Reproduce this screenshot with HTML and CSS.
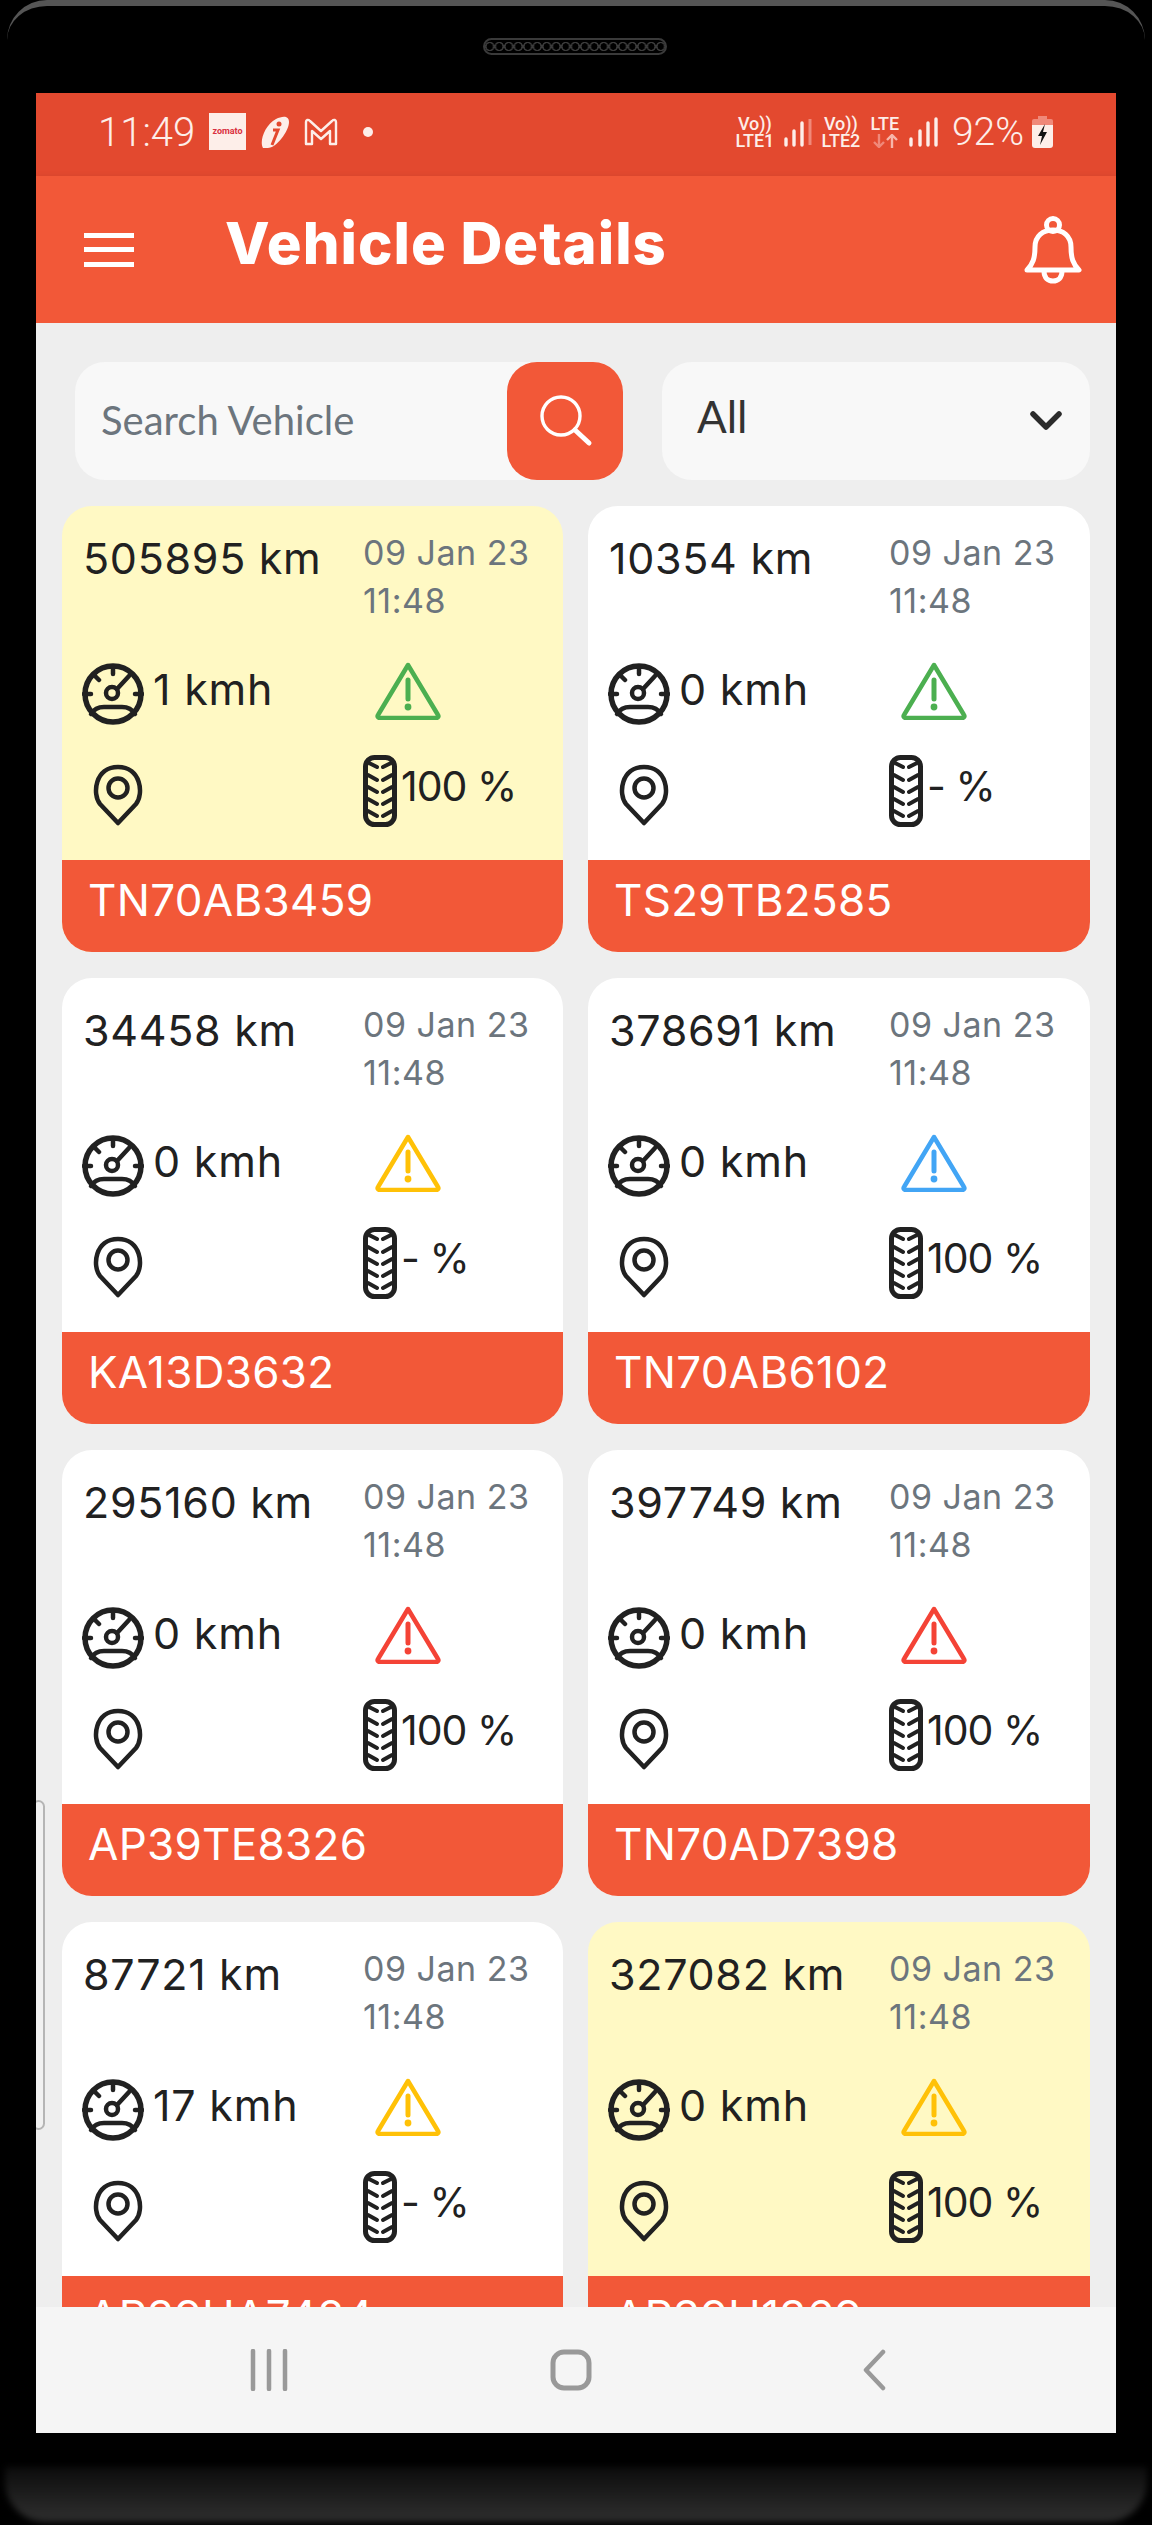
FILE: index.html
```html
<!DOCTYPE html>
<html lang="en">
<head>
  <meta charset="UTF-8">
  <title>Vehicle Details</title>
  <meta name="viewport" content="width=device-width, initial-scale=1.0">
  <link rel="stylesheet" href="styles.css">
</head>
<body>

  <svg class="defs" width="0" height="0">
    <symbol id="gauge" viewBox="0 0 62 62">
      <g fill="none" stroke="currentColor" stroke-linecap="round">
        <circle cx="31" cy="31" r="28" stroke-width="5.500"/>
        <path d="M31 4v7M12 12l5 5M2 31h7M53 31h7" stroke-width="4.500"/>
        <path d="M35 26L47 13" stroke-width="4.500"/>
        <circle cx="30" cy="30" r="6" stroke-width="4.500"/>
        <path d="M9 51c3-5 8-7 13-7h18c5 0 10 2 13 7" stroke-width="4.500"/>
      </g>
    </symbol>
    <symbol id="pin" viewBox="0 0 50 62">
      <path d="M25 59L7 40C-1 30 2 3 25 3s26 27 18 37z" fill="none" stroke="currentColor" stroke-width="4.500" stroke-linejoin="round"/>
      <circle cx="25" cy="24" r="9.500" fill="none" stroke="currentColor" stroke-width="4.500"/>
    </symbol>
    <symbol id="tire" viewBox="0 0 34 72">
      <rect x="2.500" y="2.500" width="29" height="67" rx="9" fill="none" stroke="currentColor" stroke-width="5"/>
      <path d="M6 8l8 4M28 8l-8 4M5 20l9 5M29 20l-9 5M5 32l9 5M29 32l-9 5M5 44l9 5M29 44l-9 5M5 56l9 5M29 56l-9 5" fill="none" stroke="currentColor" stroke-width="4" stroke-linecap="round"/>
    </symbol>
    <symbol id="warn" viewBox="0 0 66 58">
      <path d="M33 3L63 53c1 1.500 0 3-2 3H5c-2 0-3-1.500-2-3z" fill="none" stroke="currentColor" stroke-width="4.500" stroke-linejoin="round"/>
      <path d="M33 18v19" fill="none" stroke="currentColor" stroke-width="5" stroke-linecap="round"/>
      <circle cx="33" cy="45" r="3.400" fill="currentColor"/>
    </symbol>
  </svg>

  <div class="phone">
    <div class="top-edge"></div>
    <div class="speaker"></div>

    <div class="screen">
      <div class="status-bar">
        <div class="status-left">
          <span class="clock">11:49</span>
          <span class="zomato">zomato</span>
          <svg class="icici" width="30" height="34" viewBox="0 0 30 34">
            <path d="M3 33C-1 26 5 10 16 4c6-3 13-4 13 3 0 9-13 27-22 26z" fill="#fdeee9"/>
            <path d="M12 30l6-15h-5" fill="none" stroke="#e3492f" stroke-width="3"/>
            <circle cx="19" cy="9" r="2.500" fill="#e3492f"/>
          </svg>
          <svg class="gmail" width="34" height="28" viewBox="0 0 34 28">
            <path d="M2 26V4c0-2 2-3 4-1l11 10L28 3c2-2 4-1 4 1v22h-6V13l-9 8-9-8v13z" fill="none" stroke="#fdeee9" stroke-width="2.400" stroke-linejoin="round"/>
          </svg>
          <span class="dot"></span>
        </div>
        <div class="status-right">
          <div class="sim">Vo))<br>LTE1</div>
          <svg width="28" height="30" viewBox="0 0 28 30">
            <path d="M2 22v6M10 14v14M18 6v22" stroke="#fdeee9" stroke-width="3.400" stroke-linecap="round"/>
            <path d="M26 2v26" stroke="#f0897a" stroke-width="3"/>
          </svg>
          <div class="sim">Vo))<br>LTE2</div>
          <div class="lte">
            <span>LTE</span>
            <svg width="28" height="14" viewBox="0 0 28 14">
              <path d="M8 0v13M3 8l5 5 5-5" fill="none" stroke="#f0897a" stroke-width="2.400"/>
              <path d="M21 14V1M16 6l5-5 5 5" fill="none" stroke="#f7b6aa" stroke-width="2.400"/>
            </svg>
          </div>
          <svg width="30" height="30" viewBox="0 0 30 30">
            <path d="M3 22v6M12 14v14M20 6v22M28 2v26" stroke="#fdeee9" stroke-width="3.400" stroke-linecap="round"/>
          </svg>
          <span class="percent">92%</span>
          <svg class="battery" width="21" height="33" viewBox="0 0 21 33">
            <path d="M6 1h9v3h-9z" fill="#f0897a"/>
            <path d="M2 4h17a2 2 0 0 1 2 2v4H0V6a2 2 0 0 1 2-2z" fill="#f0897a"/>
            <path d="M0 10h21v20a3 3 0 0 1-3 3H3a3 3 0 0 1-3-3z" fill="#fdeee9"/>
            <path d="M13 9l-7 12h4l-2 9 7-13h-4z" fill="#111"/>
          </svg>
        </div>
      </div>

      <header class="app-bar">
        <div class="menu-icon"><span></span><span></span><span></span></div>
        <h1>Vehicle Details</h1>
        <svg class="bell" width="58" height="68" viewBox="0 0 58 68">
          <g fill="none" stroke="#fff" stroke-width="5" stroke-linejoin="round">
            <circle cx="29" cy="9" r="6.500"/>
            <path d="M3 54c6-6 8-12 8-23 0-11 8-17 18-17s18 6 18 17c0 11 2 17 8 23z"/>
            <path d="M20 55c0 7 4 10 9 10s9-3 9-10"/>
          </g>
        </svg>
      </header>

      <main class="content">
        <div class="side-handle"></div>

        <div class="filters">
          <div class="search">
            <span class="placeholder">Search Vehicle</span>
            <button class="search-btn">
              <svg width="60" height="60" viewBox="0 0 60 60">
                <circle cx="26" cy="25" r="19" fill="none" stroke="#fff" stroke-width="3.400"/>
                <path d="M40 39l14 13" stroke="#fff" stroke-width="5" stroke-linecap="round"/>
              </svg>
            </button>
          </div>
          <div class="select">
            <span>All</span>
            <svg width="32" height="20" viewBox="0 0 32 20">
              <path d="M3 3l13 13L29 3" fill="none" stroke="#2b2b2b" stroke-width="5.500" stroke-linecap="round" stroke-linejoin="round"/>
            </svg>
          </div>
        </div>

        <div class="cards">

          <div class="card highlight">
            <div class="card-body">
              <div class="km">505895 km</div>
              <div class="when">09 Jan 23<br>11:48</div>
              <div class="speed"><svg class="i-gauge"><use href="#gauge"/></svg><span>1 kmh</span></div>
              <svg class="i-warn green"><use href="#warn"/></svg>
              <svg class="i-pin"><use href="#pin"/></svg>
              <div class="tyre"><svg class="i-tire"><use href="#tire"/></svg><span>100 %</span></div>
            </div>
            <div class="plate">TN70AB3459</div>
          </div>

          <div class="card">
            <div class="card-body">
              <div class="km">10354 km</div>
              <div class="when">09 Jan 23<br>11:48</div>
              <div class="speed"><svg class="i-gauge"><use href="#gauge"/></svg><span>0 kmh</span></div>
              <svg class="i-warn green"><use href="#warn"/></svg>
              <svg class="i-pin"><use href="#pin"/></svg>
              <div class="tyre"><svg class="i-tire"><use href="#tire"/></svg><span>- %</span></div>
            </div>
            <div class="plate">TS29TB2585</div>
          </div>

          <div class="card">
            <div class="card-body">
              <div class="km">34458 km</div>
              <div class="when">09 Jan 23<br>11:48</div>
              <div class="speed"><svg class="i-gauge"><use href="#gauge"/></svg><span>0 kmh</span></div>
              <svg class="i-warn yellow"><use href="#warn"/></svg>
              <svg class="i-pin"><use href="#pin"/></svg>
              <div class="tyre"><svg class="i-tire"><use href="#tire"/></svg><span>- %</span></div>
            </div>
            <div class="plate">KA13D3632</div>
          </div>

          <div class="card">
            <div class="card-body">
              <div class="km">378691 km</div>
              <div class="when">09 Jan 23<br>11:48</div>
              <div class="speed"><svg class="i-gauge"><use href="#gauge"/></svg><span>0 kmh</span></div>
              <svg class="i-warn blue"><use href="#warn"/></svg>
              <svg class="i-pin"><use href="#pin"/></svg>
              <div class="tyre"><svg class="i-tire"><use href="#tire"/></svg><span>100 %</span></div>
            </div>
            <div class="plate">TN70AB6102</div>
          </div>

          <div class="card">
            <div class="card-body">
              <div class="km">295160 km</div>
              <div class="when">09 Jan 23<br>11:48</div>
              <div class="speed"><svg class="i-gauge"><use href="#gauge"/></svg><span>0 kmh</span></div>
              <svg class="i-warn red"><use href="#warn"/></svg>
              <svg class="i-pin"><use href="#pin"/></svg>
              <div class="tyre"><svg class="i-tire"><use href="#tire"/></svg><span>100 %</span></div>
            </div>
            <div class="plate">AP39TE8326</div>
          </div>

          <div class="card">
            <div class="card-body">
              <div class="km">397749 km</div>
              <div class="when">09 Jan 23<br>11:48</div>
              <div class="speed"><svg class="i-gauge"><use href="#gauge"/></svg><span>0 kmh</span></div>
              <svg class="i-warn red"><use href="#warn"/></svg>
              <svg class="i-pin"><use href="#pin"/></svg>
              <div class="tyre"><svg class="i-tire"><use href="#tire"/></svg><span>100 %</span></div>
            </div>
            <div class="plate">TN70AD7398</div>
          </div>

          <div class="card">
            <div class="card-body">
              <div class="km">87721 km</div>
              <div class="when">09 Jan 23<br>11:48</div>
              <div class="speed"><svg class="i-gauge"><use href="#gauge"/></svg><span>17 kmh</span></div>
              <svg class="i-warn yellow"><use href="#warn"/></svg>
              <svg class="i-pin"><use href="#pin"/></svg>
              <div class="tyre"><svg class="i-tire"><use href="#tire"/></svg><span>- %</span></div>
            </div>
            <div class="plate">AP39HA7484</div>
          </div>

          <div class="card highlight">
            <div class="card-body">
              <div class="km">327082 km</div>
              <div class="when">09 Jan 23<br>11:48</div>
              <div class="speed"><svg class="i-gauge"><use href="#gauge"/></svg><span>0 kmh</span></div>
              <svg class="i-warn yellow"><use href="#warn"/></svg>
              <svg class="i-pin"><use href="#pin"/></svg>
              <div class="tyre"><svg class="i-tire"><use href="#tire"/></svg><span>100 %</span></div>
            </div>
            <div class="plate">AP39U1369</div>
          </div>

        </div>
      </main>

      <nav class="nav-bar">
        <svg width="38" height="42" viewBox="0 0 38 42">
          <path d="M3 2v38M19 2v38M35 2v38" stroke="#999" stroke-width="4.500" stroke-linecap="round"/>
        </svg>
        <svg width="42" height="42" viewBox="0 0 42 42">
          <rect x="3" y="3" width="36" height="36" rx="11" fill="none" stroke="#999" stroke-width="5"/>
        </svg>
        <svg class="nav-back" width="24" height="42" viewBox="0 0 24 42">
          <path d="M21 3L4 21l17 18" fill="none" stroke="#999" stroke-width="4.500" stroke-linecap="round" stroke-linejoin="round"/>
        </svg>
      </nav>
    </div>

    <div class="chin"></div>
  </div>

</body>
</html>
```

FILE: styles.css
```css
* {
  box-sizing: border-box;
}
body {
  margin: 0;
  background: #000;
  font-family: "Inter", "Liberation Sans", sans-serif;
}
.defs {
  position: absolute;
}
.phone {
  position: relative;
  width: 1152px;
  height: 2525px;
  padding-top: 93px;
  background: #000;
  display: flex;
  flex-direction: column;
  align-items: center;
}
.top-edge {
  position: absolute;
  top: 0;
  left: 7px;
  right: 7px;
  height: 50px;
  border-top: 6px solid #555;
  border-radius: 40px 40px 0 0;
}
.speaker {
  position: absolute;
  top: 38px;
  left: 483px;
  width: 184px;
  height: 17px;
  border: 2px solid #3a3a3a;
  border-radius: 9px;
  background: radial-gradient(circle, #000 3px, #3c3c3c 3.500px 4.400px, #000 5px) 0 0 / 9.500px 100%;
}
.screen {
  width: 1080px;
  height: 2340px;
  display: flex;
  flex-direction: column;
  overflow: hidden;
}

/* status bar */
.status-bar {
  height: 83px;
  flex: none;
  background: #e3492f;
  color: #fdeee9;
  padding: 0 0 6px 64px;
  display: flex;
  align-items: center;
  justify-content: space-between;
}
.status-left,
.status-right {
  display: flex;
  align-items: center;
}
.status-right {
  gap: 8px;
  padding-right: 63px;
}
.clock {
  font: 300 40px "Roboto", sans-serif;
  width: 109px;
  margin-left: -2px;
  margin-right: 2px;
  padding-top: 2px;
}
.zomato {
  width: 37px;
  height: 37px;
  background: #fdeee9;
  color: #d9303f;
  font: 700 9px/37px "Roboto", sans-serif;
  text-align: center;
  margin-right: 14px;
}
.icici {
  margin-right: 14px;
}
.gmail {
  margin-right: 25px;
}
.dot {
  width: 10px;
  height: 10px;
  border-radius: 50%;
  background: #fdeee9;
}
.sim {
  font: 500 18px/17px "Roboto", sans-serif;
  text-align: center;
  width: 42px;
}
.lte {
  width: 30px;
  font: 500 18px/17px "Roboto", sans-serif;
  display: flex;
  flex-direction: column;
  align-items: center;
  gap: 2px;
}
.percent {
  font: 300 39px "Roboto", sans-serif;
  margin-left: 6px;
}

/* app bar */
.app-bar {
  height: 147px;
  flex: none;
  background: #f25838;
  padding: 0 34px 0 48px;
  display: flex;
  align-items: center;
  box-shadow: 0 3px 8px rgba(0, 0, 0, .15);
  position: relative;
}
.menu-icon {
  width: 50px;
  height: 34px;
  display: flex;
  flex-direction: column;
  justify-content: space-between;
  margin-right: 91px;
}
.menu-icon span {
  height: 5px;
  background: #fff;
}
.app-bar h1 {
  flex: 1;
  margin: 0 0 14px;
  color: #fff;
  font-size: 58px;
  font-weight: 800;
  letter-spacing: 1px;
}

/* content */
.content {
  flex: 1;
  min-height: 0;
  background: #eee;
  overflow: hidden;
  position: relative;
}
.side-handle {
  position: absolute;
  left: -4px;
  top: 1477px;
  width: 13px;
  height: 330px;
  border: 2px solid #b5b5b5;
  border-radius: 8px;
  background: #f1f1f1;
}
.filters {
  display: flex;
  gap: 39px;
  padding: 39px 26px 26px 39px;
}
.search {
  width: 548px;
  height: 118px;
  background: #f8f8f8;
  border-radius: 30px;
  display: flex;
  align-items: center;
  justify-content: space-between;
  padding-left: 26px;
}
.placeholder {
  font: 400 40px "Lato", sans-serif;
  color: #6c757d;
  margin-bottom: 2px;
}
.search-btn {
  width: 116px;
  height: 118px;
  border: none;
  border-radius: 30px;
  background: #f25838;
  padding: 0;
  display: flex;
  align-items: center;
  justify-content: center;
}
.select {
  flex: 1;
  height: 118px;
  background: #f8f8f8;
  border-radius: 30px;
  padding: 0 28px 10px 35px;
  display: flex;
  align-items: center;
  justify-content: space-between;
  font: 400 44px "Lato", sans-serif;
  color: #333;
}
.select svg {
  margin-top: 10px;
}

/* vehicle cards */
.cards {
  display: grid;
  grid-template-columns: 501px 502px;
  gap: 26px 25px;
  padding: 0 26px;
}
.card {
  height: 446px;
  border-radius: 30px;
  overflow: hidden;
  background: #fff;
  display: flex;
  flex-direction: column;
}
.card.highlight {
  background: #fff9c4;
}
.card-body {
  flex: 1;
  color: #212121;
  padding: 22px 0 0 21px;
  display: grid;
  grid-template-columns: 280px 1fr;
  grid-template-rows: 134px 64px 101px;
}
.km {
  font-size: 43px;
  letter-spacing: .7px;
  line-height: 58px;
  padding-top: 1px;
}
.when {
  font-size: 34px;
  letter-spacing: .5px;
  line-height: 48px;
  color: #6c757d;
  padding-top: 1px;
}
.speed,
.tyre {
  display: flex;
  align-items: center;
}
.speed {
  gap: 9px;
  font-size: 43px;
  letter-spacing: .8px;
}
.speed span {
  margin-bottom: 10px;
}
.tyre {
  gap: 4px;
  font-size: 41px;
  letter-spacing: -1px;
  margin-top: 29px;
  height: 72px;
}
.tyre span {
  margin-bottom: 10px;
}
.i-gauge {
  width: 62px;
  height: 62px;
  margin-left: -1px;
  flex: none;
}
.i-warn {
  width: 66px;
  height: 58px;
  margin-left: 12px;
}
.i-pin {
  width: 50px;
  height: 62px;
  margin: 38px 0 0 10px;
}
.i-tire {
  width: 34px;
  height: 72px;
  flex: none;
}
.green {
  color: #4caf50;
}
.yellow {
  color: #ffc107;
}
.blue {
  color: #42a5f5;
}
.red {
  color: #f44336;
}
.plate {
  height: 92px;
  flex: none;
  background: #f25838;
  color: #fff;
  font-size: 44px;
  letter-spacing: .3px;
  line-height: 80px;
  padding-left: 26px;
}

/* android nav */
.nav-bar {
  height: 126px;
  flex: none;
  background: #f5f5f5;
  padding-left: 214px;
  display: flex;
  align-items: center;
  gap: 262px;
  position: relative;
}
.nav-back {
  margin-left: 8px;
}
.chin {
  position: absolute;
  left: 5px;
  right: 5px;
  bottom: 3px;
  height: 55px;
  border-radius: 0 0 40px 40px;
  background: linear-gradient(#0c0c0c, #2a2a2a 85%);
  filter: blur(3px);
}
```
